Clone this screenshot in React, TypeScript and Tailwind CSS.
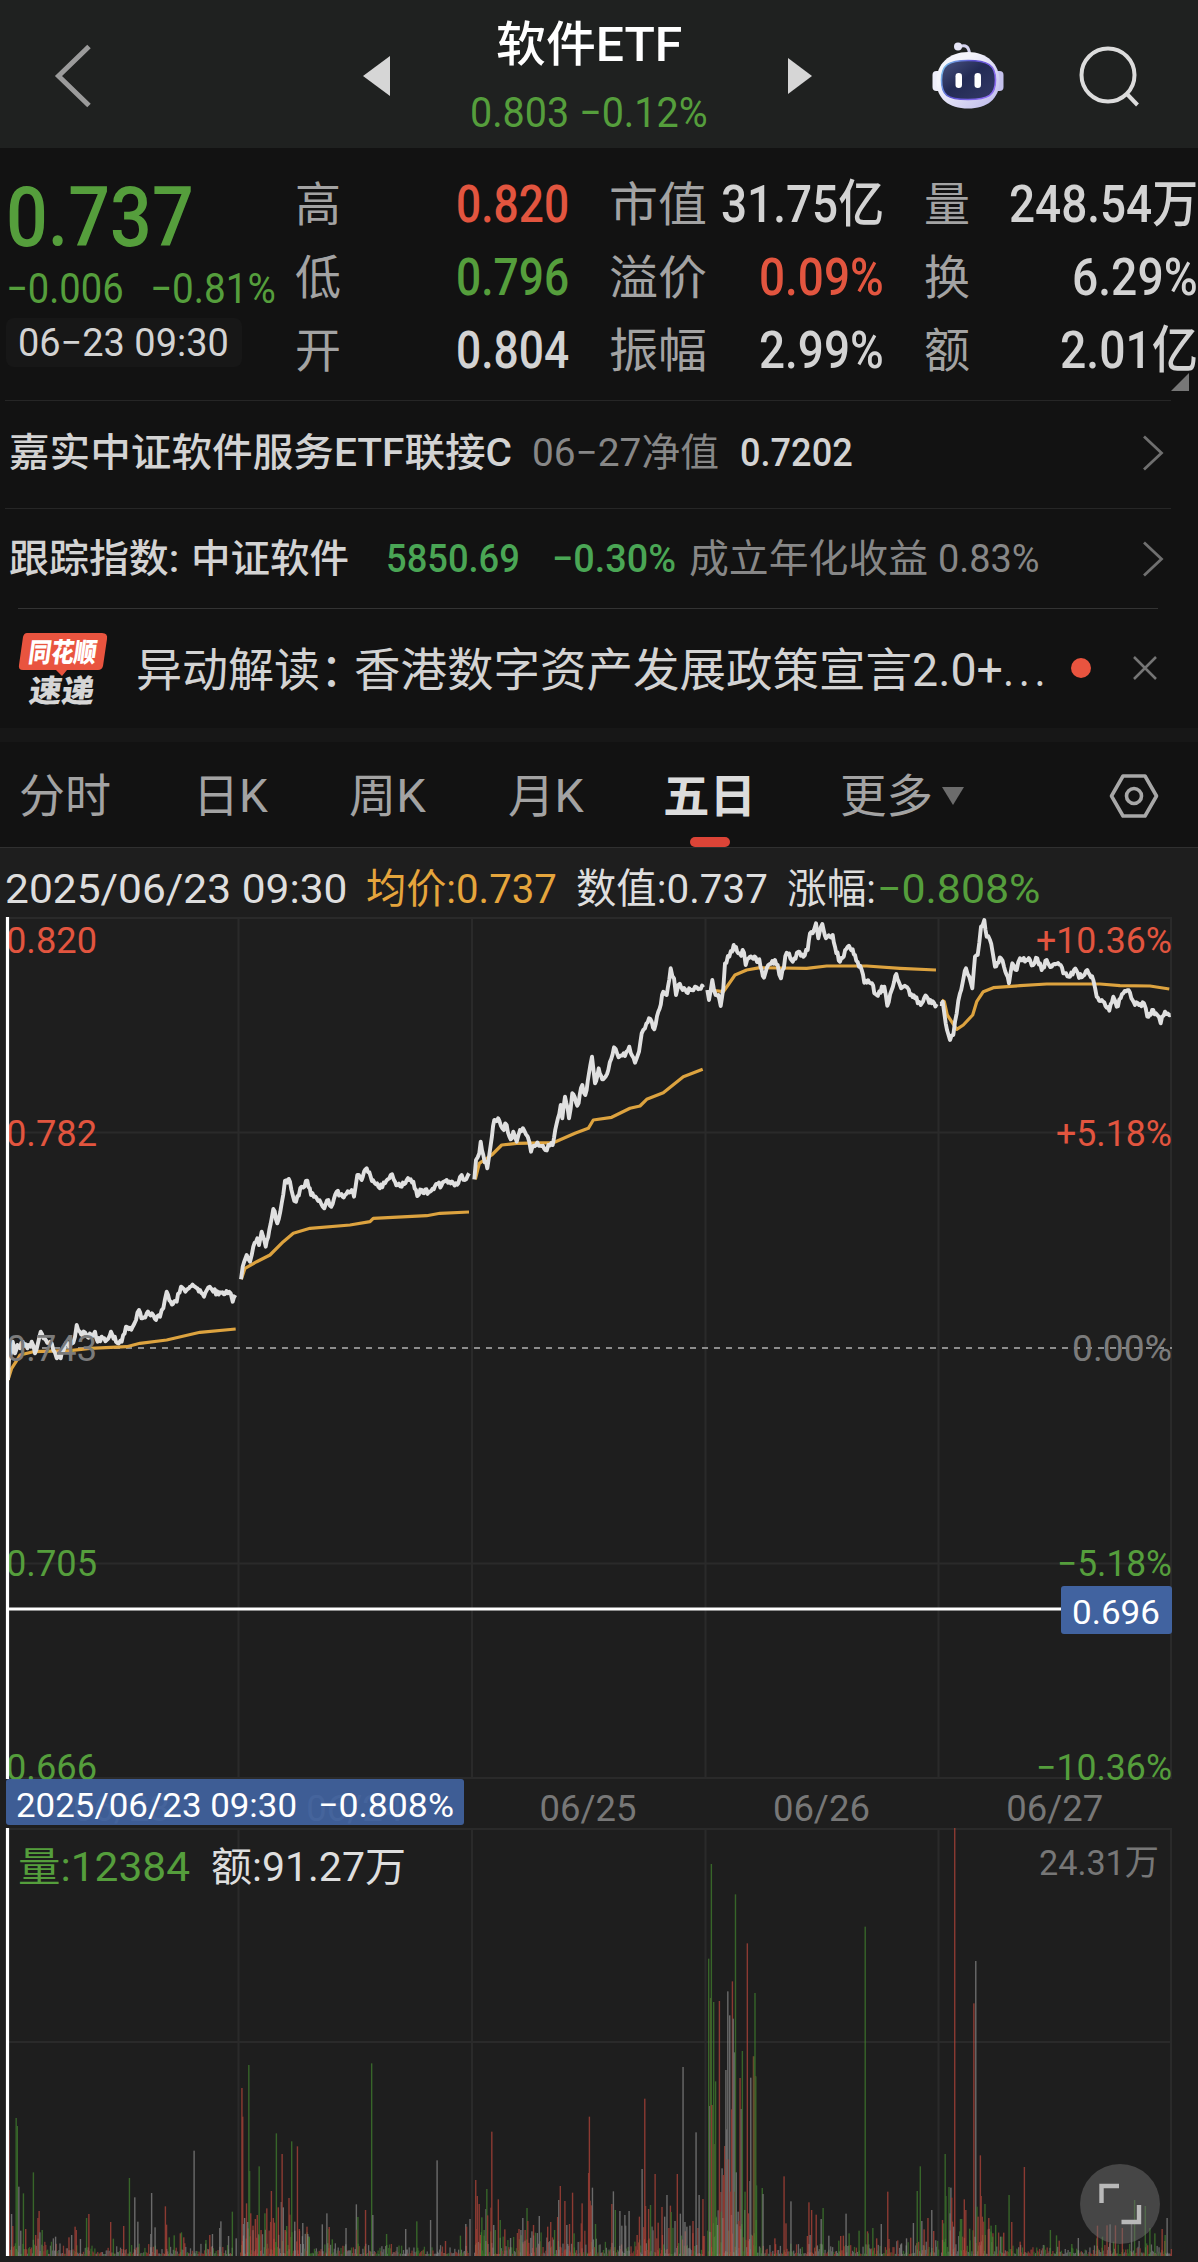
import { useLayoutEffect, useRef, type ReactNode } from "react";

const RED = "#e2553f";
const GREEN = "#559e3c";

function Fit({ w, className = "", children }: { w: number; className?: string; children: ReactNode }) {
  const ref = useRef<HTMLSpanElement>(null);
  useLayoutEffect(() => {
    const el = ref.current;
    if (el) el.style.transform = `scaleX(${w / el.offsetWidth})`;
  }, [w]);
  return <span className={`block shrink-0 whitespace-nowrap ${className}`} style={{ width: w }}>
    <span ref={ref} className="inline-block origin-left">{children}</span>
  </span>;
}

function Robot() {
  return <svg width="72" height="68" viewBox="0 0 72 68" className="ml-[120px] shrink-0">
    <defs>
      <linearGradient id="shell" x1="0" y1="0" x2="1" y2="1"><stop offset="0.3" stopColor="#f4f4fb" /><stop offset="1" stopColor="#b9b6ea" /></linearGradient>
      <linearGradient id="visor" x1="0" y1="0" x2="1" y2="1"><stop offset="0" stopColor="#4a5380" /><stop offset="0.45" stopColor="#232b55" /><stop offset="1" stopColor="#343a66" /></linearGradient>
      <linearGradient id="rim" x1="0" y1="0" x2="1" y2="0.4"><stop offset="0" stopColor="#7fd0f0" /><stop offset="0.5" stopColor="#5a4fd0" /><stop offset="1" stopColor="#8a6cf0" /></linearGradient>
    </defs>
    <path d="M27 5 C34 2 37 5 37.5 12" fill="none" stroke="#d5d3ef" strokeWidth="3" />
    <circle cx="26" cy="4.5" r="4" fill="#e6e5f6" />
    <rect x="0.5" y="29" width="10" height="20" rx="4" fill="#eeeefa" />
    <rect x="61.500" y="29" width="10" height="20" rx="4" fill="#c4c1ec" />
    <path d="M36 10 C55 10 67.500 22 67.500 39 C67.500 57 55 66.500 36 66.500 C17 66.500 4.500 57 4.500 39 C4.500 22 17 10 36 10Z" fill="url(#shell)" />
    <path d="M36 18.500 C56 18.500 63.500 23 63.500 38 C63.500 53 57 57.500 36 57.500 C15 57.500 9.500 53 9.500 38 C9.500 23 16 18.500 36 18.500Z" fill="url(#visor)" stroke="url(#rim)" strokeWidth="1.6" />
    <rect x="23.500" y="31" width="6.500" height="15" rx="3.200" fill="#fff" />
    <rect x="42.500" y="31" width="6.500" height="15" rx="3.200" fill="#fff" />
  </svg>;
}

function Header() {
  return <header className="flex h-[148px] items-center bg-[#1f2120] pt-1 pl-[54px]">
    <svg width="37" height="64" viewBox="0 0 37 64" className="shrink-0"><path d="M35 2.500 L4.500 32 L35 61.500" fill="none" stroke="#9b9b9b" strokeWidth="5" /></svg>
    <svg width="27" height="40" viewBox="0 0 27 40" className="ml-[272px] shrink-0"><path d="M0 20 L27 0 V40Z" fill="#d6d6d6" /></svg>
    <div className="ml-[81px] flex h-full w-[236px] shrink-0 flex-col items-center pt-[11px]">
      <Fit w={186} className="text-[48px] leading-[60px] font-medium text-white">软件ETF</Fit>
      <Fit w={238} className="mt-3 text-[42px] leading-[52px] text-[#559e3c]">0.803 −0.12%</Fit>
    </div>
    <svg width="24" height="36" viewBox="0 0 24 36" className="ml-[81px] shrink-0"><path d="M24 18 L0 0 V36Z" fill="#d6d6d6" /></svg>
    <Robot />
    <svg width="62" height="62" viewBox="0 0 62 62" className="ml-[74px] shrink-0"><circle cx="30" cy="30" r="26.500" fill="none" stroke="#dcdcdc" strokeWidth="4" /><path d="M48 48 L59.500 60" stroke="#dcdcdc" strokeWidth="4" /></svg>
  </header>;
}

const stats = [
  [["高", 46, "0.820", 113, "text-[#e2553f]"], ["市值", 98, "31.75亿", 163, "text-[#d3d3d3]"], ["量", 46, "248.54万", 189, "text-[#d3d3d3]"]],
  [["低", 46, "0.796", 113, "text-[#559e3c]"], ["溢价", 98, "0.09%", 125, "text-[#e2553f]"], ["换", 46, "6.29%", 126, "text-[#d3d3d3]"]],
  [["开", 46, "0.804", 113, "text-[#d3d3d3]"], ["振幅", 98, "2.99%", 125, "text-[#d3d3d3]"], ["额", 46, "2.01亿", 138, "text-[#d3d3d3]"]],
] as [string, number, string, number, string][][];

function Quote() {
  return <section className="relative flex h-[252px]">
    <div className="w-[295px] shrink-0 pt-[22px] pl-[6px] text-[#559e3c]">
      <Fit w={188} className="text-[83px] leading-[96px] font-medium">0.737</Fit>
      <div className="flex gap-[26px] text-[42px] leading-[46px]"><Fit w={118}>−0.006</Fit><Fit w={126}>−0.81%</Fit></div>
      <div className="mt-1.5 flex h-[49px] w-[236px] items-center rounded-lg bg-[#171717] pt-0.5 pl-3 text-[39px] leading-[49px] text-[#d3d3d3]"><Fit w={211}>06−23 09:30</Fit></div>
    </div>
    <div className="flex-1 pt-5">
      {stats.map((row, i) => <div key={i} className="grid h-[73px] grid-cols-[274px_40px_275px_40px_274px] items-center">
        {row.map(([label, lw, value, vw, color], j) => <div key={label} className={`flex items-center justify-between ${j === 0 ? "col-start-1" : j === 1 ? "col-start-3" : "col-start-5"}`}>
          <Fit w={lw} className="text-[47px] leading-[73px] text-[#a3a3a3]">{label}</Fit>
          <Fit w={vw} className={`text-[51px] leading-[73px] font-medium ${color}`}>{value}</Fit>
        </div>)}
      </div>)}
    </div>
    <svg width="18" height="18" viewBox="0 0 18 18" className="absolute right-[9px] bottom-[9px]"><path d="M18 0 V18 H0Z" fill="#777" /></svg>
  </section>;
}

function Chevron() {
  return <svg width="22" height="36" viewBox="0 0 22 36" className="mr-[34px] ml-auto shrink-0"><path d="M2 1.500 L19.500 18 L2 34.500" fill="none" stroke="#6f6f6f" strokeWidth="2.800" /></svg>;
}

function FundRows() {
  return <section>
    <div className="mr-[27px] ml-[5px] h-px bg-[#262626]" />
    <div className="flex h-[107px] items-center pb-1 pl-[9px] text-[39px] leading-[50px]">
      <Fit w={503} className="font-medium text-[#d3d3d3]">嘉实中证软件服务ETF联接C</Fit>
      <Fit w={187} className="ml-5 text-[#878787]">06−27净值</Fit>
      <Fit w={113} className="ml-[21px] font-medium text-[#d3d3d3]">0.7202</Fit>
      <Chevron />
    </div>
    <div className="mr-[27px] ml-[5px] h-px bg-[#262626]" />
    <div className="flex h-[99px] items-center pl-[9px] text-[39px] leading-[50px]">
      <Fit w={170} className="font-medium text-[#d3d3d3]">跟踪指数:</Fit>
      <Fit w={158} className="ml-3 font-medium text-[#d3d3d3]">中证软件</Fit>
      <Fit w={134} className="ml-[37px] font-medium text-[#4aa655]">5850.69</Fit>
      <Fit w={124} className="ml-8 font-medium text-[#4aa655]">−0.30%</Fit>
      <Fit w={239} className="ml-[13px] text-[#878787]">成立年化收益</Fit>
      <Fit w={102} className="ml-[10px] text-[#878787]">0.83%</Fit>
      <Chevron />
    </div>
    <div className="mr-10 ml-[18px] h-px bg-[#333]" />
  </section>;
}

function News() {
  return <section className="flex h-[119px] items-center pb-px pl-[18px]">
    <svg width="90" height="76" viewBox="0 0 90 76" className="shrink-0">
      <path d="M9 3 H84 Q90 3 89 9 L85 36 Q84 40 80 40 H49 L44 46 L38 40 H5 Q0 40 1 35 L5 7 Q6 3 9 3Z" fill="#e9543f" />
      <text x="10" y="32" fontSize="27" fontWeight="900" fill="#fff" textLength="68" lengthAdjust="spacingAndGlyphs" transform="skewX(-8) translate(4 0)">同花顺</text>
      <text x="10" y="72" fontSize="31" fontWeight="900" fill="#d6d6d6" textLength="65" lengthAdjust="spacingAndGlyphs" transform="skewX(-8) translate(10 0)">速递</text>
    </svg>
    <div className="ml-7 flex w-[912px] shrink-0 pt-1 text-[46px] leading-[60px] text-[#d3d3d3]">
      <Fit w={230}>异动解读：</Fit>
      <Fit w={649} className="-ml-3">香港数字资产发展政策宣言2.0+</Fit>
      <Fit w={47} className="tracking-[5px]">...</Fit>
    </div>
    <span className="ml-[23px] size-[20px] shrink-0 rounded-full bg-[#e9543f]" />
    <svg width="26" height="26" viewBox="0 0 26 26" className="ml-[41px] shrink-0"><path d="M2 2 L24 24 M24 2 L2 24" stroke="#757575" strokeWidth="2.500" /></svg>
  </section>;
}

function Tabs() {
  return <nav className="flex h-[106px] items-center border-b border-[#303030] pt-0.5 pl-[19px] text-[46px] leading-[60px] text-[#a3a3a3]">
    <Fit w={92}>分时</Fit>
    <Fit w={75} className="ml-[82px]">日K</Fit>
    <Fit w={77} className="ml-[81px]">周K</Fit>
    <Fit w={76} className="ml-[82px]">月K</Fit>
    <div className="relative ml-[79px]">
      <Fit w={93} className="font-bold text-[#dcdcdc]">五日</Fit>
      <span className="absolute top-[71px] left-[27px] h-[10px] w-10 rounded-full bg-[#dc4437]" />
    </div>
    <Fit w={93} className="ml-[84px]">更多</Fit>
    <svg width="22" height="18" viewBox="0 0 22 18" className="ml-[9px]"><path d="M0 0 H22 L11 18Z" fill="#6c6c6c" /></svg>
    <svg width="50" height="46" viewBox="0 0 50 46" className="ml-[145px]" fill="none" stroke="#a8a8a8" strokeWidth="3.600" strokeLinejoin="round"><path d="M14 3 H36 L47.500 23 L36 43 H14 L2.500 23Z" /><circle cx="25" cy="23" r="7.500" /></svg>
  </nav>;
}

// Traced points, one entry per stretch; units are thirds of a pixel from (x, y).
const price = [
  { x: 0, y: 1140, p: "24,720 27,660 33,640 38,605 45,640 52,615 60,625 68,605 82,625 95,605 105,640 115,605 122,575 130,595 150,605 160,630 170,655 182,655 195,615 215,610 225,590 230,555 240,575 262,590 285,575 293,605 305,590 320,600 333,575 348,605 365,605 378,560 398,560 408,540 417,510 428,535 440,520 456,520 468,540 480,530 490,505 500,455 512,485 530,485 543,440 556,455 570,440 585,440 600,450 612,470 629,440 640,455 660,457 675,462 692,460 698,485 706,465" },
  { x: 0, y: 1140, p: "723,418 728,380 740,345 750,365 760,320 772,295 777,315 785,275 797,320 808,270 820,207 832,250 845,190 855,122 870,125 878,165 888,185 905,140 922,122 933,165 950,175 963,190 973,205 985,180 994,200 1010,155 1035,165 1055,150 1062,170 1072,105 1085,120 1100,85 1112,110 1135,140 1155,130 1172,105 1185,125 1205,140 1220,120 1240,125 1252,168 1265,150 1290,155 1305,138 1325,135 1340,120 1360,130 1375,130 1385,105 1395,120 1407,100" },
  { x: 460, y: 900, p: "43,838 48,780 58,760 62,725 70,765 82,805 92,735 103,660 118,662 127,685 140,675 152,718 160,695 170,725 180,690 193,692 203,710 213,755 228,735 245,738 256,750 265,735 278,735 290,670 302,615 307,655 315,590 327,655 337,580 352,617 367,555 376,585 387,520 396,470 405,550 416,505 430,538 445,510 462,442 472,462 495,468 508,440 525,488 537,455 545,400 555,385 567,355 583,388 595,335 610,275 620,285 632,205 642,235 648,285 655,255 668,270 695,270 705,260 715,268 730,262" },
  { x: 460, y: 900, p: "742,270 747,300 757,240 767,285 775,285 782,318 790,265 795,190 808,170 821,135 835,160 852,158 857,195 866,175 898,178 912,233 925,195 945,180 953,195 963,235 980,158 998,185 1015,155 1030,170 1043,150 1050,100 1062,90 1068,70 1075,115 1087,72 1098,115 1118,105 1125,140 1140,185 1163,140 1185,165 1197,200 1205,210 1213,248 1232,250 1250,285 1273,260 1282,317 1295,270 1309,222 1320,255 1338,260 1350,285 1365,295 1382,315 1400,290 1415,310 1430,312" },
  { x: 800, y: 840, p: "420,492 428,485 437,550 450,600 460,585 470,520 480,460 498,385 508,410 517,445 525,350 533,345 543,260 553,240 560,290 570,300 585,380 603,355 612,380 627,430 637,370 650,390 660,355 690,360 700,375 712,355 725,390 740,360 755,380 782,375 790,400 810,410 822,390 845,412 862,390 880,420 890,470 905,480 928,512 940,470 950,500 970,460 990,458 1005,495 1032,490 1042,530 1060,510 1072,525 1082,550 1095,515 1112,525" },
];
const average = [
  { x: 0, y: 1140, p: "24,720 35,685 48,665 60,645 100,635 210,632 270,625 380,620 420,610 500,600 600,577 707,567" },
  { x: 0, y: 1140, p: "724,418 735,385 770,365 810,345 850,305 880,280 930,265 1050,255 1110,245 1120,235 1280,227 1320,220 1407,216" },
  { x: 460, y: 900, p: "46,838 58,790 95,765 125,735 170,730 280,728 345,700 385,685 400,660 455,652 510,625 540,618 560,598 610,578 670,530 728,508" },
  { x: 460, y: 900, p: "750,270 790,275 808,250 825,225 860,210 900,203 1040,205 1100,198 1220,198 1320,205 1428,210" },
  { x: 800, y: 840, p: "425,480 433,485 442,525 470,568 490,555 518,525 530,485 550,455 580,443 660,437 740,432 900,432 960,437 1050,438 1108,447" },
];

// Small seeded generator so that the fine texture is the same on every render.
function rng(seed: number) {
  return () => {
    seed = (seed * 1664525 + 1013904223) >>> 0;
    return seed / 4294967296;
  };
}

function toPoints({ x, y, p }: { x: number; y: number; p: string }, jitter = 0) {
  const rand = rng(x + p.length);
  const pts = p.split(" ").map((s) => s.split(",").map(Number));
  const out: string[] = [];
  pts.forEach(([px, py], i) => {
    out.push(`${(x + px / 3).toFixed(1)},${(y + py / 3).toFixed(1)}`);
    const next = pts[i + 1];
    if (!jitter || !next) return;
    const n = Math.floor((next[0] - px) / 3.5);
    for (let k = 1; k < n; k++) {
      const t = k / n;
      const dy = (rand() - 0.5) * jitter;
      out.push(`${(x + (px + (next[0] - px) * t) / 3).toFixed(1)},${(y + (py + (next[1] - py) * t) / 3 + dy).toFixed(1)}`);
    }
  });
  return out.join(" ");
}

// Volume spikes: x, height and tick direction (r up, g down, w flat).
const left = "23,840r 24,1020r 42,804g 45,828g 49,1010w 30,1092w 33,1128r 61,1030g 67,1137r 87,967g 93,1155r 99,1104r 102,1083r 104,1147w 110,1140g 54,1142w 145,1160w 180,1162r 187,1155w 196,1130r 199,1140r 210,1167w 226,1104g 232,1092r 289,1116r 296,1166g 323,1128r 338,984g 352,1042w 360,1115w 396,1029w 405,1132w 394,1152w 432,1069r 435,1124r 442,1162g 455,1156g 471,1150r 474,1147g 480,1162r 507,902w 538,1170g 548,1155r 555,1152w 574,1134w 577,1114w 597,1158w 607,1085g 617,1165w 632,714r 634,800r 636,1122w 639,1104w 644,1060r 650,645g 652,963g 647,1116w 655,1090r 661,1127r 667,1107r 672,1095r 677,949g 682,1140r 692,1090g 697,1075r 709,1023r 707,1116r 714,1104r 717,1118r 722,850g 727,1072r 735,1056w 737,912r 740,1072w 745,1140r 749,1128g 755,1044r 757,1094r 762,874g 770,1115w 777,889r 782,1137r 791,1119w 802,1130r 804,1152w 808,1160g 842,1123w 854,1090w 857,1137g 860,1131r 868,1168g 904,1134w 931,1063w 933,1139r 935,1101g 955,1080r 971,640g 974,1095w 1010,1152g 1060,1137w 1089,1114g 1125,1110w 1142,931w 1164,1173r 1203,1157g 1217,1122w 1219,1130r 1228,1107w 1243,990r 1245,1137r 1247,1038r 1252,1062r 1255,1155r 1259,1102g 1265,1140g 1270,1077w 1272,1017g 1274,1096r 1283,1073r 1285,845r 1290,1125w 1294,1140g 1302,1048r 1307,1110g 1319,1138r 1334,1164w 1356,1137r 1361,1140w 1366,1104w 1372,1140r 1377,1074g 1379,1113r 1390,1144w 1394,1125r 1409,1098w 1431,1130r 1439,1116r 1449,1140g 1457,1101r 1460,1050w 1464,1008r 1476,1053r 1481,1125w 1488,1122r 1496,1028r 1500,1150g 1519,1120r 1521,1060r 1538,969r 1540,800r 1542,1052r 1545,1066r 1548,1013w 1556,1122g";
const right = "36,1152r 40,1114w 45,1170g 57,1173w 62,1217w 70,1185w 72,1217w 81,1173w 102,1245r 108,1190r 115,1047w 122,836r 124,1158r 132,1167r 137,1155g 149,1062r 157,1208r 167,1161r 174,1190w 180,1125w 185,1224r 189,1157r 191,1176g 201,1203w 207,1062r 215,1181w 222,741w 227,1206w 232,1220w 240,1217w 248,1203r 256,937w 261,1224r 264,1125w 274,1137r 287,1232g 289,416g 292,858w 294,534r 295,534g 296,132g 297,855r 299,855r 300,855g 302,546g 304,973r 305,973g 307,784g 309,1190g 312,1215w 315,1215g 317,543r 321,1116r 322,1175g 324,1045w 327,1065r 329,1070r 331,978r 334,750w 336,928w 338,1018r 339,514w 342,1018r 344,586w 346,1115r 349,868r 351,484r 353,596w 356,697w 358,1115r 359,223g 361,1057w 366,1175w 368,1203r 371,774r 374,867w 377,693g 384,1115g 390,370r 393,1180r 397,1083w 399,773w 406,709r 408,709g 410,519g 411,769r 412,769g 414,1096g 429,1104g 431,1122w 462,1255r 486,1069r 491,1210r 504,1144w 547,1248r 551,1147r 554,1245w 558,1170r 570,1184r 583,1197w 588,1164g 603,1247w 629,1262g 634,1248r 641,1247r 648,1181w 656,1240g 682,1232g 698,320g 704,1234r 706,1240g 718,1224g 728,1255r 740,1212w 757,1115r 760,1257r 793,1270w 806,1255w 817,1253r 824,1209w 834,1113g 842,1039g 846,1203w 852,1228r 862,1194r 872,1170w 877,1233r 900,1200r 903,1210g 907,1002g 909,1128g 917,1101g 920,1180w 922,1103w 924,1133r 926,1205r 932,24r 929,1220w 947,1197g 950,1197g 957,1138r 961,1170r 971,1226g 982,550r 987,423w 990,1160g 993,1190r 999,1006r 1001,1128r 1004,1190r 1008,1205r 1011,1152g 1021,1194r 1027,1217g 1031,1250g 1039,1215g 1055,1250g 1060,1238r 1074,1125g 1081,1206r 1103,1265r 1114,1041r 1182,1230g 1198,1246g 1205,1262r 1238,1272g 1255,1254w 1303,1255g 1305,1217r 1318,1250g 1330,1216r 1338,1213w 1347,1265g 1352,1216r 1370,1224r 1394,1206w 1402,1140g 1430,1158g 1442,1224g 1455,1240g 1474,1227r 1482,1245g 1487,1194w";
const FILL: Record<string, string> = { r: "#c0483c", g: "#43872f", w: "#8f8f8f" };
const spikes = [
  ...left.split(" ").map((s) => ({ s, x0: 0, base: 1218 })),
  ...right.split(" ").map((s) => ({ s, x0: 598, base: 1308 })),
].map(({ s, x0, base }) => {
  const [a, b] = s.split(",");
  return { x: x0 + Number(a) / 2.6133, h: (base - parseInt(b)) / 3, c: b.slice(-1) };
});

// Low background volume; [from, to, typical height]
const noiseBands = [[9, 60, 16], [60, 130, 9], [130, 232, 11], [240, 310, 28], [310, 400, 11], [400, 468, 9], [474, 600, 24], [600, 640, 15], [640, 704, 28], [708, 756, 48], [756, 880, 11], [880, 938, 14], [941, 1000, 26], [1000, 1090, 10], [1090, 1171, 14]];
const noise = noiseBands.flatMap(([from, to, top], i) => {
  const rand = rng(77 + i);
  const out: { x: number; h: number; c: string }[] = [];
  for (let x = from; x < to; x += 0.95) out.push({ x, h: 2 + rand() ** 2.2 * top, c: "rgwrgww"[Math.floor(rand() * 7)] });
  return out;
});

const axis = [
  { y: 940, l: "0.820", r: "+10.36%", w: 136, c: RED },
  { y: 1133, l: "0.782", r: "+5.18%", w: 116, c: RED },
  { y: 1348, l: "0.743", r: "0.00%", w: 100, c: "#7b7b7b" },
  { y: 1563, l: "0.705", r: "−5.18%", w: 115, c: GREEN },
  { y: 1767, l: "0.666", r: "−10.36%", w: 136, c: GREEN },
];
const days = ["06/23", "06/24", "06/25", "06/26", "06/27"];

function Charts() {
  return <svg width="1198" height="1346" viewBox="0 916 1198 1346" className="block">
    <g stroke="#2a2a2a" strokeWidth="2">
      {[918, 1132.5, 1563.5, 1778, 1829, 2042].map((y) => <path key={y} d={`M6 ${y} H1172`} />)}
      {[238.5, 472, 705.5, 938.5, 1171].map((x) => <path key={x} d={`M${x} 918 V1778 M${x} 1829 V2256`} />)}
    </g>
    <path d="M6 1348 H1172" stroke="#8d8d8d" strokeWidth="2" strokeDasharray="6 6" />
    <g opacity="0.62">
      {noise.map(({ x, h, c }, i) => <rect key={i} x={x} y={2256 - h} width="1.300" height={h} fill={FILL[c]} />)}
    </g>
    <g opacity="0.68">
      {spikes.map(({ x, h, c }, i) => <rect key={i} x={x - 0.6} y={2256 - h} width="1.400" height={h} fill={FILL[c]} />)}
    </g>
    <g fill="none" strokeLinejoin="round">
      {average.map((s, i) => <polyline key={i} points={toPoints(s)} stroke="#dda33f" strokeWidth="3.200" />)}
      {price.map((s, i) => <polyline key={i} points={toPoints(s, 6)} stroke="#e0e0e0" strokeWidth="3.900" />)}
    </g>
    <g fontSize="36">
      {axis.map(({ y, l, r, w, c }) => <g key={l} fill={c}>
        <text x="6" y={y + 13} textLength="91" lengthAdjust="spacingAndGlyphs">{l}</text>
        <text x={1172 - w} y={y + 13} textLength={w} lengthAdjust="spacingAndGlyphs">{r}</text>
      </g>)}
      {days.map((d, i) => <text key={d} x={73 + i * 233.3} y="1821" textLength="97" lengthAdjust="spacingAndGlyphs" fill="#777">{d}</text>)}
      <text x="1039" y="1875" fontSize="35" textLength="120" lengthAdjust="spacingAndGlyphs" fill="#777">24.31万</text>
    </g>
    <path d="M7.500 917 V1779 M7.500 1828 V2256 M6 1609 H1062" stroke="#fff" strokeWidth="3.200" />
    <rect x="1061" y="1586" width="111" height="48" rx="3" fill="#4163a0" />
    <text x="1072" y="1624" fontSize="34" fill="#fff" textLength="88" lengthAdjust="spacingAndGlyphs">0.696</text>
    <rect x="6" y="1779" width="458" height="46" rx="3" fill="#4163a0" fillOpacity="0.92" />
    <text x="16" y="1817" fontSize="34" fill="#fff" textLength="281" lengthAdjust="spacingAndGlyphs">2025/06/23 09:30</text>
    <text x="318" y="1817" fontSize="34" fill="#fff" textLength="136" lengthAdjust="spacingAndGlyphs">−0.808%</text>
    <g fontSize="40">
      <text x="18" y="1881" fill={GREEN} textLength="172" lengthAdjust="spacingAndGlyphs">量:12384</text>
      <text x="211" y="1881" fill="#dedede" textLength="195" lengthAdjust="spacingAndGlyphs">额:91.27万</text>
    </g>
    <circle cx="1120" cy="2204" r="40" fill="#6e6e6e" fillOpacity="0.5" />
    <path d="M1101.500 2203 V2186 H1119 M1121.500 2222 H1139 V2205" fill="none" stroke="#b9b9b9" strokeWidth="4.400" />
  </svg>;
}

export default function App() {
  return <main className="h-[2262px] w-[1198px] overflow-hidden bg-[#121212] [font-family:Roboto,'Noto_Sans_CJK_SC',sans-serif]">
    <Header />
    <Quote />
    <FundRows />
    <News />
    <div className="h-[14px] bg-[#171717]" />
    <Tabs />
    <section className="bg-[#1e1e1e]">
      <div className="flex h-[68px] items-center pt-3.5 pl-[5px] text-[41px] leading-[54px] text-[#dedede]">
        <Fit w={342}>2025/06/23 09:30</Fit>
        <Fit w={191} className="ml-[19px] text-[#e5a53c]">均价:0.737</Fit>
        <Fit w={192} className="ml-[19px]">数值:0.737</Fit>
        <Fit w={89} className="ml-[19px]">涨幅:</Fit>
        <Fit w={163} className="ml-px text-[#559e3c]">−0.808%</Fit>
      </div>
      <Charts />
    </section>
  </main>;
}
